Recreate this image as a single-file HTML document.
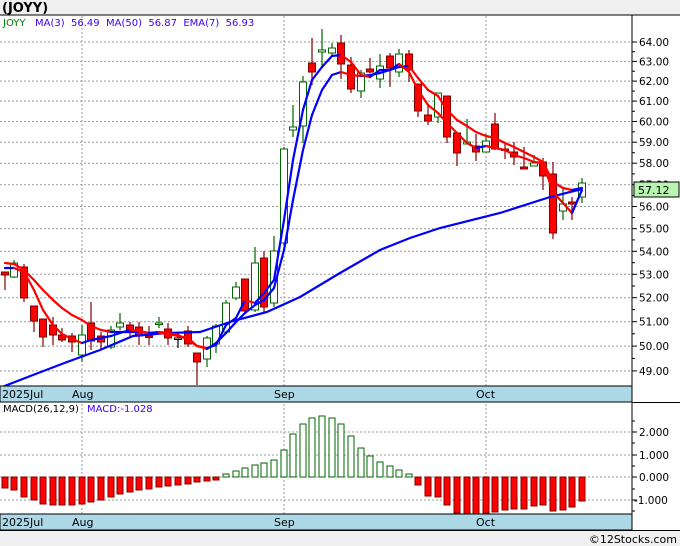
<!DOCTYPE html>
<html><head><meta charset="utf-8"><style>
html,body{margin:0;padding:0;background:#f0f0f0;width:680px;height:546px;overflow:hidden}
svg{display:block}
text{font-family:"DejaVu Sans","Liberation Sans",sans-serif}
</style></head><body>
<svg id="s" width="680" height="546" xmlns="http://www.w3.org/2000/svg">
<rect x="0" y="0" width="680" height="546" fill="#f0f0f0"/>
<rect x="0" y="15" width="680" height="515" fill="#fff"/>
<text x="2" y="12" font-size="13" font-weight="bold" fill="#000">(JOYY)</text>
<g id="g"></g>
<text x="3" y="26" font-size="10" fill="#008000">JOYY</text>
<text x="35" y="26" font-size="10" fill="#4000ff" xml:space="preserve">MA(3)  56.49  MA(50)  56.87  EMA(7)  56.93</text>
<text x="3" y="412" font-size="10" fill="#000">MACD(26,12,9)</text>
<text x="87" y="412" font-size="10" fill="#4000ff">MACD:-1.028</text>
<text x="677" y="543" font-size="11" fill="#000" text-anchor="end">©12Stocks.com</text>
</svg>
<script>
var g=document.getElementById('g'),h='';
function Y(p){return 42+(Math.log(64)-Math.log(p))*1231.7;}
// grid
for(var p=49;p<=64;p++){var y=Y(p).toFixed(1);h+='<line x1="0" y1="'+y+'" x2="632" y2="'+y+'" stroke="#999" stroke-dasharray="2,2"/>';
h+='<line x1="632" y1="'+y+'" x2="637" y2="'+y+'" stroke="#000"/>';
h+='<text x="639" y="'+(+y+4)+'" font-size="10.5" fill="#000">'+p+'.00</text>';
if(p<64){var y2=Y(p+0.5).toFixed(1);h+='<line x1="632" y1="'+y2+'" x2="635" y2="'+y2+'" stroke="#000"/>';}}
[82,284,486].forEach(function(x){h+='<line x1="'+x+'" y1="16" x2="'+x+'" y2="530" stroke="#999" stroke-dasharray="2,2"/>';});
[[432,'2.000'],[455,'1.000'],[477,'0.000'],[500,'-1.000']].forEach(function(a){h+='<line x1="0" y1="'+a[0]+'" x2="632" y2="'+a[0]+'" stroke="#999" stroke-dasharray="2,2"/><line x1="632" y1="'+a[0]+'" x2="637" y2="'+a[0]+'" stroke="#000"/><text x="'+(a[1][0]=='-'?634:639)+'" y="'+(a[0]+4)+'" font-size="10.5" fill="#000">'+a[1]+'</text>';});
[421,443,466,489,511].forEach(function(y){h+='<line x1="632" y1="'+y+'" x2="635" y2="'+y+'" stroke="#000"/>';});
// candles [x,wt,wb,bt,bb,c]
var C=[[5,272,290,272,275,'r'],[14,260,278,263,277,'g'],[24,264,302,267,298,'r'],[34,306,332,306,321,'r'],[43,319,347,319,337,'r'],[53,317,345,325,335,'r'],[62,328,342,335,340,'r'],[72,333,352,336,342,'r'],[82,325,362,335,355,'g'],[91,302,350,323,341,'r'],[101,332,350,336,342,'r'],[111,326,349,330,347,'g'],[120,313,330,323,327,'g'],[130,322,337,325,330,'r'],[139,322,345,327,336,'r'],[149,326,345,336,337,'r'],[159,317,328,323,324,'g'],[168,323,345,329,338,'r'],[178,332,348,338,339,'k'],[188,326,347,331,344,'r'],[197,353,385,353,362,'r'],[207,336,367,338,359,'g'],[216,324,353,326,344,'g'],[226,300,334,303,332,'g'],[236,282,300,287,298,'g'],[245,279,313,279,311,'r'],[255,247,312,263,310,'g'],[264,251,312,258,307,'r'],[274,236,307,251,303,'g'],[284,147,245,149,243,'g'],[293,105,137,127,130,'g'],[303,76,143,82,126,'g'],[312,38,85,63,72,'r'],[322,29,66,50,52,'g'],[332,43,56,48,53,'g'],[341,35,79,43,64,'r'],[351,57,93,65,89,'r'],[361,70,98,73,91,'g'],[370,58,73,69,72,'r'],[380,54,88,66,79,'g'],[390,53,87,56,68,'r'],[399,49,77,54,72,'g'],[409,50,82,54,70,'r'],[418,84,117,84,111,'r'],[428,105,125,115,121,'r'],[438,93,123,93,117,'g'],[447,96,143,96,137,'r'],[457,133,166,133,153,'r'],[467,119,144,142,144,'g'],[476,134,161,146,152,'r'],[486,134,152,141,152,'g'],[495,113,150,124,149,'r'],[505,142,159,149,150,'r'],[514,142,165,152,157,'r'],[524,147,169,167,169,'r'],[534,155,166,163,166,'g'],[543,158,190,162,176,'r'],[553,162,239,174,233,'r'],[563,188,220,204,211,'g'],[572,197,220,202,204,'r'],[582,178,203,183,197,'g']];
C.forEach(function(c){var col=c[5]=='r'?'#800000':(c[5]=='g'?'#006400':'#000');
h+='<line x1="'+c[0]+'" y1="'+c[1]+'" x2="'+c[0]+'" y2="'+c[2]+'" stroke="'+col+'" stroke-width="1.2"/>';
var bh=Math.max(c[4]-c[3],1.5);
h+='<rect x="'+(c[0]-3.5)+'" y="'+c[3]+'" width="7" height="'+bh+'" fill="'+(c[5]=='r'?'#ff0000':'#fff')+'" stroke="'+col+'" stroke-width="1"/>';});
function line(P,w){for(var i=1;i<P.length;i++){var col=P[i][1]<=P[i-1][1]?'#0000ff':'#ff0000';h+='<line x1="'+P[i-1][0]+'" y1="'+P[i-1][1]+'" x2="'+P[i][0]+'" y2="'+P[i][1]+'" stroke="'+col+'" stroke-width="'+w+'" stroke-linecap="round"/>';}}
var MA50=[[2,387],[33,375],[67,362],[100,350],[133,336],[167,333],[200,332],[233,321],[267,312],[300,297],[340,273],[380,250],[410,238],[440,228],[500,213],[550,197],[582,189]];
var s='';MA50.forEach(function(p){s+=p[0]+','+p[1]+' ';});h+='<polyline points="'+s+'" fill="none" stroke="#0000ff" stroke-width="2.2"/>';
var EMA=[[5,263],[14,264],[24,270],[34,280],[43,290],[53,300],[62,308],[72,315],[82,320],[91,326],[101,330],[111,332],[120,332],[130,332],[139,332],[149,333],[159,333],[168,334],[178,336],[188,338],[197,346],[207,349],[216,343],[226,333],[236,322],[245,313],[255,305],[264,300],[274,288],[284,250],[293,200],[303,150],[312,115],[322,90],[332,75],[341,72],[351,75],[361,76],[370,75],[380,73],[390,70],[399,67],[409,66],[418,78],[428,90],[438,96],[447,110],[457,120],[467,126],[476,132],[486,136],[495,138],[505,143],[514,147],[524,152],[534,157],[543,162],[553,182],[563,188],[572,190],[582,188]];
var MA3=[[5,268],[14,268],[24,272],[34,290],[43,310],[53,325],[62,334],[72,339],[82,343],[91,340],[101,338],[111,336],[120,333],[130,330],[139,331],[149,333],[159,332],[168,333],[178,335],[188,340],[197,346],[207,348],[216,345],[226,325],[236,318],[245,300],[255,303],[264,293],[274,280],[284,220],[293,160],[303,110],[312,80],[322,67],[332,56],[341,55],[351,62],[361,75],[370,77],[380,70],[390,70],[399,64],[409,72],[418,90],[428,105],[438,113],[447,123],[457,133],[467,143],[476,148],[486,146],[495,148],[505,150],[514,155],[524,158],[534,162],[543,163],[553,192],[563,203],[572,213],[582,190]];
line(EMA,2.2);line(MA3,2.2);
// MACD
var M=[[5,488],[14,490],[24,497],[34,500],[43,504],[53,505],[62,505],[72,505],[82,504],[91,502],[101,500],[111,497],[120,494],[130,492],[139,490],[149,489],[159,487],[168,486],[178,485],[188,484],[197,482],[207,481],[216,480],[226,474],[236,471],[245,468],[255,465],[264,463],[274,460],[284,450],[293,434],[303,424],[312,418],[322,416],[332,418],[341,424],[351,436],[361,448],[370,456],[380,462],[390,466],[399,470],[409,474],[418,485],[428,496],[438,497],[447,505],[457,513],[467,514],[476,515],[486,513],[495,512],[505,510],[514,509],[524,509],[534,506],[543,505],[553,511],[563,510],[572,507],[582,501]];
M.forEach(function(m){var up=m[1]<477;var y1=up?m[1]:477,hh=Math.abs(m[1]-477);
h+='<rect x="'+(m[0]-3)+'" y="'+y1+'" width="6" height="'+hh+'" fill="'+(up?'#fff':'#ff0000')+'" stroke="'+(up?'#006400':'#800000')+'" stroke-width="1"/>';});
// bands & borders
h+='<rect x="0" y="386" width="632" height="16" fill="#add8e6" stroke="#000"/><rect x="0" y="514" width="632" height="16" fill="#add8e6" stroke="#000"/>';
h+='<text x="2" y="398" font-size="11" fill="#000">2025Jul</text><text x="72" y="398" font-size="11">Aug</text><text x="274" y="398" font-size="11">Sep</text><text x="476" y="398" font-size="11">Oct</text>';
h+='<text x="2" y="526" font-size="11" fill="#000">2025Jul</text><text x="72" y="526" font-size="11">Aug</text><text x="274" y="526" font-size="11">Sep</text><text x="476" y="526" font-size="11">Oct</text>';
h+='<line x1="0" y1="15" x2="680" y2="15" stroke="#000"/><line x1="632" y1="15" x2="632" y2="530" stroke="#000"/><line x1="632" y1="402.5" x2="680" y2="402.5" stroke="#000"/><line x1="0" y1="530.5" x2="680" y2="530.5" stroke="#000"/>';
h+='<rect x="634" y="182" width="45" height="15" fill="#b8f5b0" stroke="#000"/><text x="638" y="194" font-size="11" fill="#000">57.12</text>';
g.innerHTML=h;
</script>
</body></html>
